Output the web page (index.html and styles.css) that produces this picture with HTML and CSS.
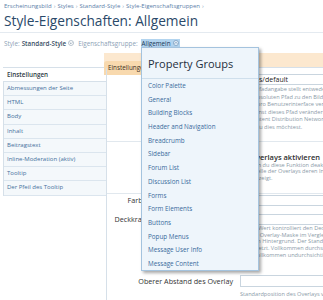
FILE: index.html
```html
<!DOCTYPE html>
<html lang="de">
<head>
<meta charset="utf-8">
<title>Style-Eigenschaften: Allgemein</title>
<link rel="stylesheet" href="styles.css">
</head>
<body>
<nav class="crumbs">
  <a>Erscheinungsbild</a><span class="sep">›</span><a>Styles</a><span class="sep">›</span><a>Standard-Style</a><span class="sep">›</span><a>Style-Eigenschaftsgruppen</a><span class="sep">›</span>
</nav>
<h1 class="title">Style-Eigenschaften: Allgemein</h1>
<div class="rule"></div>
<div class="chooser">
  <span class="muted">Style:</span>
  <b class="val">Standard-Style</b>
  <svg class="circ" viewBox="0 0 6 6" width="6" height="6"><circle cx="3" cy="3" r="2.5" fill="#fff" stroke="#8a9db0" stroke-width="0.6"/><path d="M1.8 2.5 L3 3.7 L4.2 2.5" fill="none" stroke="#6b8299" stroke-width="0.7"/></svg>
  <span class="muted grp">Eigenschaftsgruppe:</span>
  <span class="active">Allgemein <svg class="circ" viewBox="0 0 6 6" width="6" height="6"><circle cx="3" cy="3" r="2.5" fill="#e8f2fb" stroke="#5f86ad" stroke-width="0.6"/><path d="M1.8 3.6 L3 2.4 L4.2 3.6" fill="none" stroke="#3d6690" stroke-width="0.7"/></svg></span>
</div>
<div class="tabbar"><span class="tab">Einstellungen</span></div>
<div class="main">
  <aside class="side">
    <div class="side-head">Einstellungen</div>
    <ul class="side-list">
      <li>Abmessungen der Seite</li>
      <li>HTML</li>
      <li>Body</li>
      <li>Inhalt</li>
      <li>Beitragstext</li>
      <li>Inline-Moderation (aktiv)</li>
      <li>Tooltip</li>
      <li>Der Pfeil des Tooltip</li>
    </ul>
  </aside>
  <section class="form">
    <div class="row r1">
      <label class="lbl">Pfad zu den Bildern:</label>
      <div class="ctrl">
        <div class="input">styles/default</div>
        <p class="hint">Diese Pfadangabe stellt entweder einen relativen<br>oder absoluten Pfad zu den Bildern dar, die<br>Bilder pro Benutzerinterface verwendet werden.<br>Du kannst dieses Pfad verändern, wenn du<br>ein Content Distribution Network nutzen willst,<br>wenn du dies möchtest.</p>
      </div>
    </div>
    <div class="row r2">
      <span></span>
      <div class="ctrl">
        <div class="check"><span class="box"></span>Overlays aktivieren</div>
        <p class="hint indent">Wenn du diese Funktion deaktivierst, werden<br>anstelle der Overlays deren Inhalte als<br>angezeigt.</p>
      </div>
    </div>
    <div class="r3">
      <div class="sub">
        <label class="lbl">Farbe:</label>
        <div class="input wide"></div>
        <label class="lbl">Deckkraft:</label>
        <div class="input wide"></div>
      </div>
      <p class="hint shift">Dieser Wert kontrolliert den Deckkraft der<br>bei der Overlay-Maske im Vergleich zum<br>Seite im Hintergrund. Der Standardwert ist<br>0.5 gesetzt. Vollkommen durchsichtig ist 0,<br>bei 1 vollkommen undurchsichtig.</p>
    </div>
    <div class="row r4">
      <label class="lbl">Oberer Abstand des Overlay</label>
      <div class="ctrl">
        <div class="input tall"></div>
        <p class="hint">Standardposition des Overlays vom oberen Rand</p>
      </div>
    </div>
  </section>
</div>
<div class="popup">
  <div class="pop-head">Property Groups</div>
  <ul class="pop-list">
    <li>Color Palette</li>
    <li>General</li>
    <li>Building Blocks</li>
    <li>Header and Navigation</li>
    <li>Breadcrumb</li>
    <li>Sidebar</li>
    <li>Forum List</li>
    <li>Discussion List</li>
    <li>Forms</li>
    <li>Form Elements</li>
    <li>Buttons</li>
    <li>Popup Menus</li>
    <li>Message User Info</li>
    <li>Message Content</li>
  </ul>
</div>
</body>
</html>
```
FILE: styles.css
```css
* { box-sizing: border-box; margin: 0; padding: 0; }
html, body { width: 323px; height: 300px; overflow: hidden; }
body {
  font-family: "Open Sans", "DejaVu Sans", sans-serif;
  background: #fff;
  color: #333;
  position: relative;
}
ul { list-style: none; }

.crumbs {
  height: 10px;
  padding: 2px 0 0 4px;
  font-size: 6px;
  line-height: 8px;
  color: #5b80a9;
  white-space: nowrap;
}
.crumbs .sep { color: #8ea3b8; margin: 0 2px 0 2px; }

.title {
  height: 22px;
  padding: 1px 0 0 4px;
  font-size: 13.7px;
  font-weight: 400;
  line-height: 19px;
  color: #2a4969;
  white-space: nowrap;
}
.rule { height: 1px; background: #e4eaf0; }

.chooser {
  display: flex;
  align-items: center;
  height: 20px;
  padding: 0 0 0 4px;
  font-size: 6.3px;
  line-height: 9px;
  white-space: nowrap;
}
.chooser .muted { color: #8da2b6; }
.chooser .val { color: #3a4f64; font-weight: 600; margin-left: 2px; }
.chooser .circ { margin-left: 2px; display: block; }
.chooser .grp { margin-left: 4px; }
.chooser .active {
  display: flex;
  align-items: center;
  margin-left: 3px;
  padding: 0 1px;
  height: 9px;
  background: #b2d4ef;
  color: #1c3856;
}

.tabbar {
  margin-left: 104px;
  height: 14px;
  background: #fce8cf;
}
.tab {
  display: inline-block;
  height: 14px;
  padding: 0 4px;
  background: #f8d9ae;
  border-radius: 3px 3px 0 0;
  font-size: 6.3px;
  line-height: 14px;
  color: #3b2f22;
}

.main {
  display: grid;
  grid-template-columns: 104px 1fr;
  margin-left: 3px;
  border-top: 1px solid #d6e0e9;
  height: 233px;
}
.side { border-right: 1px solid #d6e0e9; }
.side-head {
  height: 13px;
  padding-left: 4px;
  font-size: 6.3px;
  font-weight: 600;
  line-height: 13px;
  color: #2f3b46;
}
.side-list {
  border-top: 1px solid #d6e0e9;
  border-left: 1px solid #d6e0e9;
}
.side-list li {
  height: 14.2px;
  padding-left: 3px;
  border-bottom: 1px solid #dbe5ee;
  background: #f4f8fb;
  font-size: 6px;
  line-height: 13.2px;
  color: #45709b;
  white-space: nowrap;
}

.form { min-width: 0; }
.row {
  display: grid;
  grid-template-columns: 126px 1fr;
  column-gap: 7px;
}
.lbl {
  text-align: right;
  font-size: 7.2px;
  color: #333;
  white-space: nowrap;
}
.ctrl { min-width: 0; }
.input {
  width: 140px;
  height: 11px;
  border: 1px solid #c9d5df;
  background: #fff;
  padding: 0 3px;
  font-size: 7px;
  line-height: 9px;
  color: #222;
  white-space: nowrap;
}
.hint {
  font-size: 5.6px;
  line-height: 6.7px;
  color: #8b9aa8;
  white-space: nowrap;
}

.r1 { padding: 6px 0 0; height: 74px; border-bottom: 1px solid #e1e8ee; }
.r1 .lbl { line-height: 11px; }
.r1 .hint { margin-top: 1.25px; line-height: 7.5px; }

.r2 { height: 52px; padding-top: 10.5px; border-bottom: 1px solid #e1e8ee; }
.check {
  display: flex;
  align-items: center;
  height: 9px;
  font-size: 7.5px;
  font-weight: 600;
  color: #2e2e2e;
  white-space: nowrap;
}
.check .box { width: 7px; height: 7px; border: 1px solid #9aa9b6; background: #fff; margin-right: 3px; }
.hint.indent { padding-left: 6px; }

.r3 { padding-top: 1px; }
.sub {
  display: grid;
  grid-template-columns: 41.5px 1fr;
  column-gap: 7px;
  row-gap: 8px;
}
.sub .lbl { line-height: 11px; }
.sub .wide { width: 200px; }
.hint.shift { margin-left: 133px; }

.r4 { margin-top: 16.5px; }
.r4 .lbl { line-height: 12px; }
.input.tall { height: 12px; }
.r4 .hint { margin-top: 3.6px; }

.popup {
  position: absolute;
  left: 141px;
  top: 47px;
  width: 118px;
  height: 224px;
  border: 1px solid #a4c3de;
  background: #eef5fb;
  box-shadow: 2px 2px 3px rgba(0, 0, 0, 0.35);
}
.pop-head {
  height: 31px;
  padding: 7.7px 0 0 6px;
  border-bottom: 1px solid #cfdfec;
  font-size: 11px;
  line-height: 15px;
  color: #1f2f40;
  white-space: nowrap;
}
.pop-list li {
  height: 13.7px;
  padding-left: 6px;
  font-size: 6.3px;
  line-height: 13.7px;
  color: #3a6b9c;
  white-space: nowrap;
}
```
